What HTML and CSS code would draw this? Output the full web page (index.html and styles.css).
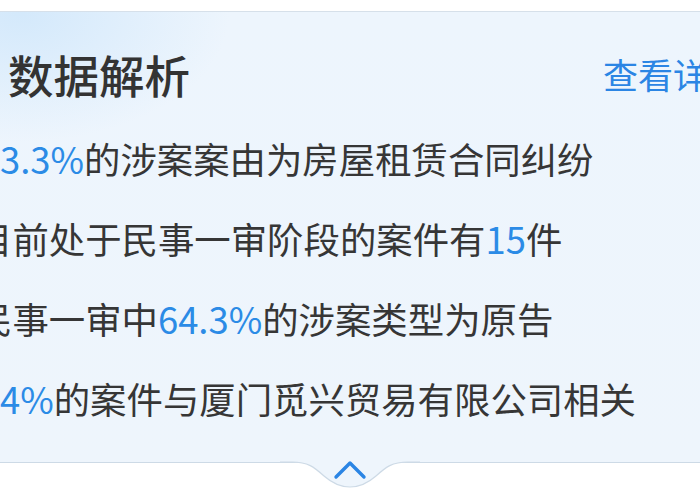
FILE: index.html
```html
<!DOCTYPE html>
<html lang="zh-CN">
<head>
<meta charset="utf-8">
<link rel="stylesheet" href="styles.css">
</head>
<body>
<div class="page">
  <section class="panel">
    <div class="head">
      <h2 class="title">数据解析</h2>
      <a class="more">查看详</a>
    </div>
    <ul class="list">
      <li class="line lead"><span class="num">3.3%</span>的涉案案由为房屋租赁合同纠纷</li>
      <li class="line cut">目前处于民事一审阶段的案件有<span class="num">15</span>件</li>
      <li class="line cut">民事一审中<span class="num">64.3%</span>的涉案类型为原告</li>
      <li class="line lead"><span class="num">4%</span>的案件与厦门觅兴贸易有限公司相关</li>
    </ul>
  </section>
  <div class="tab">
    <svg width="140" height="45" viewBox="0 0 140 45">
      <path d="M0 0 H140 V13 H128 C112 13 106 18 96 27 C88 34 80 38 70 38 C60 38 52 34 44 27 C34 18 28 13 12 13 H0 Z" fill="#eef5fc"/>
      <path d="M0 13 H12 C28 13 34 18 44 27 C52 34 60 38 70 38 C80 38 88 34 96 27 C106 18 112 13 128 13 H140" fill="none" stroke="#cddae6" stroke-width="1.2"/>
      <polyline points="56,28 70,14 84,28" fill="none" stroke="#2b85e4" stroke-width="3.4" stroke-linecap="round" stroke-linejoin="round"/>
    </svg>
  </div>
</div>
</body>
</html>
```
FILE: styles.css
```css
html, body {
  margin: 0;
  padding: 0;
  background: #ffffff;
}
.page {
  width: 700px;
  height: 500px;
  overflow: hidden;
  padding-top: 11px;
  box-sizing: border-box;
  font-family: "Noto Sans CJK SC", "Noto Sans", sans-serif;
}
.panel {
  border-top: 1px solid #d6e0ea;
  border-bottom: 1px solid #cddae6;
  background:
    radial-gradient(ellipse 210px 130px at 20px 0px, rgba(210, 232, 251, 0.95), rgba(210, 232, 251, 0) 100%),
    linear-gradient(180deg, #edf5fd 0%, #eef5fc 100%);
  padding: 37px 0 23px 0;
  overflow: hidden;
}
.head {
  display: flex;
  align-items: center;
  height: 50px;
  padding-left: 8px;
}
.title {
  margin: 0;
  font-size: 45.5px;
  line-height: 50px;
  font-weight: 500;
  color: #333333;
}
.more {
  margin-left: auto;
  margin-right: -8px;
  font-size: 35px;
  line-height: 50px;
  color: #2b85e4;
  white-space: nowrap;
}
.list {
  list-style: none;
  margin: 20px 0 0 0;
  padding: 0;
}
.line {
  height: 80px;
  line-height: 79px;
  font-size: 36.4px;
  color: #363636;
  white-space: nowrap;
}
.line.cut {
  margin-left: -24px;
}
.line.lead {
  margin-left: 0;
}
.num {
  color: #2b8be6;
}
.tab {
  display: flex;
  justify-content: center;
  margin-top: -14px;
  line-height: 0;
}
```
